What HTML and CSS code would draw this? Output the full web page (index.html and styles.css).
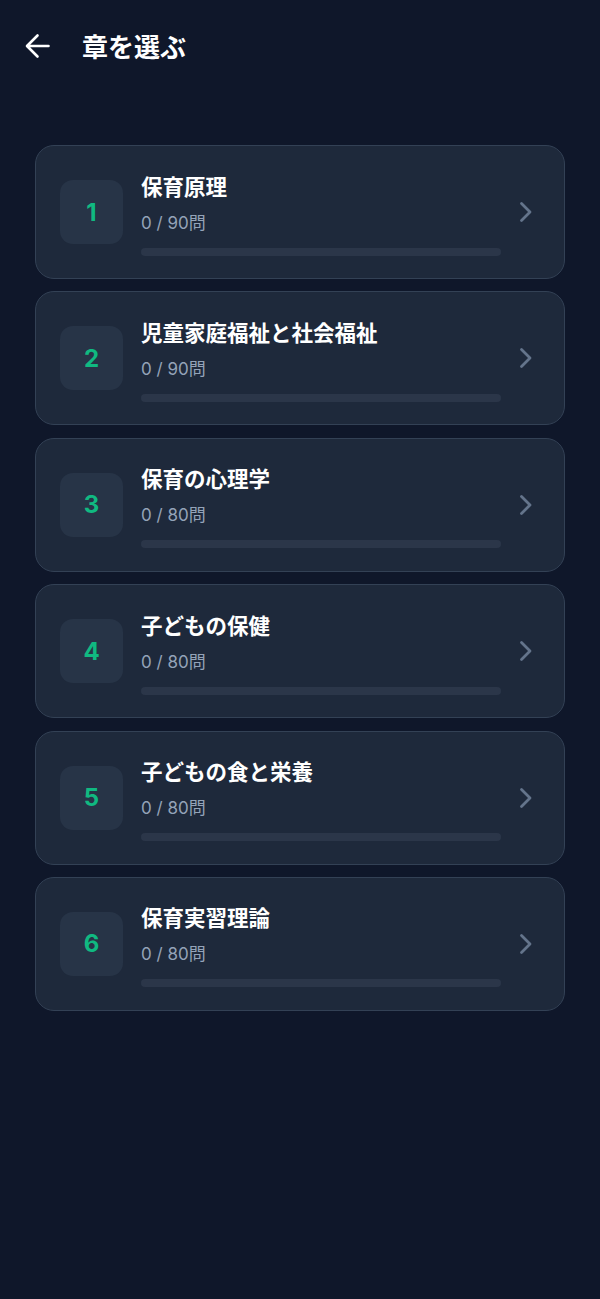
FILE: index.html
```html
<!DOCTYPE html>
<html lang="ja">
<head>
<meta charset="utf-8">
<title>章を選ぶ</title>
<link rel="stylesheet" href="styles.css">
</head>
<body>
<header class="header">
  <svg class="back" width="26" height="26" viewBox="0 0 26 26" fill="none" stroke="#ffffff" stroke-width="2.6" stroke-linecap="round" stroke-linejoin="round"><path d="M23.5 13H2.5M12.5 2.5L2 13l10.5 10.5"/></svg>
  <h1 class="title">章を選ぶ</h1>
</header>
<main class="list">
  <div class="card">
    <div class="badge">1</div>
    <div class="info">
      <div class="name">保育原理</div>
      <div class="count">0 / 90問</div>
      <div class="bar"></div>
    </div>
    <svg class="chev" width="14" height="22" viewBox="0 0 14 22" fill="none" stroke="#64748b" stroke-width="2.8" stroke-linecap="round" stroke-linejoin="round"><path d="M2.5 2.5L11 11l-8.5 8.5"/></svg>
  </div>
  <div class="card">
    <div class="badge">2</div>
    <div class="info">
      <div class="name">児童家庭福祉と社会福祉</div>
      <div class="count">0 / 90問</div>
      <div class="bar"></div>
    </div>
    <svg class="chev" width="14" height="22" viewBox="0 0 14 22" fill="none" stroke="#64748b" stroke-width="2.8" stroke-linecap="round" stroke-linejoin="round"><path d="M2.5 2.5L11 11l-8.5 8.5"/></svg>
  </div>
  <div class="card">
    <div class="badge">3</div>
    <div class="info">
      <div class="name">保育の心理学</div>
      <div class="count">0 / 80問</div>
      <div class="bar"></div>
    </div>
    <svg class="chev" width="14" height="22" viewBox="0 0 14 22" fill="none" stroke="#64748b" stroke-width="2.8" stroke-linecap="round" stroke-linejoin="round"><path d="M2.5 2.5L11 11l-8.5 8.5"/></svg>
  </div>
  <div class="card">
    <div class="badge">4</div>
    <div class="info">
      <div class="name">子どもの保健</div>
      <div class="count">0 / 80問</div>
      <div class="bar"></div>
    </div>
    <svg class="chev" width="14" height="22" viewBox="0 0 14 22" fill="none" stroke="#64748b" stroke-width="2.8" stroke-linecap="round" stroke-linejoin="round"><path d="M2.5 2.5L11 11l-8.5 8.5"/></svg>
  </div>
  <div class="card">
    <div class="badge">5</div>
    <div class="info">
      <div class="name">子どもの食と栄養</div>
      <div class="count">0 / 80問</div>
      <div class="bar"></div>
    </div>
    <svg class="chev" width="14" height="22" viewBox="0 0 14 22" fill="none" stroke="#64748b" stroke-width="2.8" stroke-linecap="round" stroke-linejoin="round"><path d="M2.5 2.5L11 11l-8.5 8.5"/></svg>
  </div>
  <div class="card">
    <div class="badge">6</div>
    <div class="info">
      <div class="name">保育実習理論</div>
      <div class="count">0 / 80問</div>
      <div class="bar"></div>
    </div>
    <svg class="chev" width="14" height="22" viewBox="0 0 14 22" fill="none" stroke="#64748b" stroke-width="2.8" stroke-linecap="round" stroke-linejoin="round"><path d="M2.5 2.5L11 11l-8.5 8.5"/></svg>
  </div>
</main>
</body>
</html>
```

FILE: styles.css
```css
html, body {
  margin: 0;
  padding: 0;
  background: #0f172a;
  min-height: 1299px;
}
body {
  font-family: "Inter", "Noto Sans CJK JP", sans-serif;
  color: #ffffff;
}
.header {
  height: 92px;
  display: flex;
  align-items: center;
  padding-left: 25px;
  box-sizing: border-box;
}
.back {
  display: block;
  margin-right: 31px;
}
.title {
  margin: 0;
  font-size: 26px;
  font-weight: 700;
  line-height: 32px;
  font-family: "Noto Sans CJK JP", sans-serif;
}
.list {
  margin: 53px 35px 0 35px;
  display: flex;
  flex-direction: column;
  gap: 12.4px;
}
.card {
  height: 134px;
  box-sizing: border-box;
  background: #1e293b;
  border: 1px solid #334155;
  border-radius: 19px;
  display: flex;
  align-items: center;
  padding: 0 31px 0 24px;
}
.badge {
  width: 63px;
  height: 64px;
  border-radius: 13px;
  background: #273447;
  color: #10b981;
  font-size: 24px;
  font-weight: 700;
  display: flex;
  align-items: center;
  justify-content: center;
  flex-shrink: 0;
}
.info {
  flex: 1;
  margin: 2px 18px 0 18px;
  display: flex;
  flex-direction: column;
}
.name {
  font-family: "Noto Sans CJK JP", sans-serif;
  font-size: 21.5px;
  font-weight: 700;
  line-height: 30px;
  color: #ffffff;
}
.count {
  margin-top: 10px;
  font-size: 17px;
  line-height: 24px;
  color: #94a3b8;
}
.bar {
  margin-top: 13px;
  height: 8px;
  border-radius: 4px;
  background: #2b3649;
}
.chev {
  display: block;
  flex-shrink: 0;
}
```
